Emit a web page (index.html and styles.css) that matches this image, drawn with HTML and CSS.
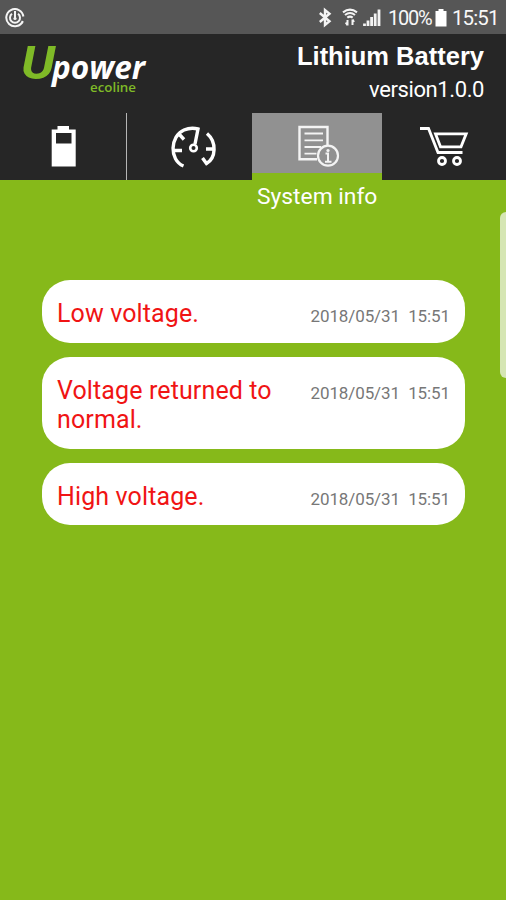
FILE: index.html
```html
<!DOCTYPE html>
<html lang="en">
<head>
    <meta charset="UTF-8">
    <meta name="viewport" content="width=device-width, initial-scale=1.0">
    <title>Lithium Battery</title>
    <link rel="stylesheet" href="styles.css">
</head>
<body>
    <div class="status-bar">
        <svg class="status-power" width="20" height="20" viewBox="0 0 20 20" fill="none" stroke="#f4f4f4">
            <path d="M17.8 13A8.6 8.6 0 1 1 18.4 8.5" stroke-width="2"/>
            <path d="M7 5.8A5 5 0 1 0 13 5.8M10 3V10" stroke-width="2"/>
            <circle cx="10" cy="10.5" r="1.6" fill="#f4f4f4" stroke="none"/>
            <circle cx="17.3" cy="14.6" r="1" fill="#f4f4f4" stroke="none"/>
        </svg>
        <div class="status-right">
            <svg width="80" height="22" viewBox="317 7 80 22" fill="none" stroke="#f4f4f4">
                <path d="M319.8 13L329.5 21.3L325 25V10L329.5 13.7L319.8 22" stroke-width="2.4"/>
                <path d="M343 12.3Q350 6.8 357 12.3M345 15Q350 11 355 15M347.3 17.6Q350 15.5 352.7 17.6" stroke-width="2.1"/>
                <path d="M347.5 25.5V20M345.8 22.5L347.5 25.3M352.5 19.5V25M352.5 19.5L354 22" stroke-width="2"/>
                <path d="M364.5 26V23.5M368 26V20.5M371.6 26V17M375.2 26V13.5M379 26V9.5" stroke-width="2.8"/>
            </svg>
            <span class="status-percent">100%</span>
            <svg class="status-battery" width="12" height="18" viewBox="0 0 12 18" fill="#fff">
                <path d="M3.5 0H8.5V2H11.5V17.5H.5V2H3.5Z"/>
            </svg>
            <span class="status-time">15:51</span>
        </div>
    </div>

    <header class="header">
        <svg class="logo" width="140" height="70" viewBox="10 36 140 70">
            <text class="logo-u" x="21" y="78.5" textLength="34" lengthAdjust="spacingAndGlyphs">U</text>
            <text class="logo-power" x="52" y="79" textLength="93" lengthAdjust="spacingAndGlyphs">power</text>
            <text class="logo-ecoline" x="90" y="91.5" textLength="46" lengthAdjust="spacingAndGlyphs">ecoline</text>
        </svg>
        <div class="title">
            <h1>Lithium Battery</h1>
            <p>version1.0.0</p>
        </div>
    </header>

    <nav class="tabs">
        <a class="tab tab-battery">
            <svg width="66" height="66" viewBox="30 113 66 66">
                <path fill="#fff" fill-rule="evenodd" d="M57.5 126H69V129.5H75.7V166.5H51.7V129.5H57.5ZM56 133V143.5H71.5V133Z"/>
            </svg>
        </a>
        <a class="tab tab-gauge">
            <svg width="60" height="66" viewBox="163 113 60 66" fill="none" stroke="#fff" stroke-width="3.4">
                <path d="M183.5 166C169 160 170 136 184 130Q191 127 198 129L195 144"/>
                <path d="M179 134L184 139.5M174 150.5H182M207 133.5C217 142 216 158 206.5 163.5L202.5 158M214 149H206"/>
                <circle cx="193.5" cy="148" r="3.3" stroke-width="2.6"/>
            </svg>
        </a>
        <a class="tab tab-info active">
            <svg width="60" height="60" viewBox="287 113 60 60" fill="none" stroke="#f4f4f4">
                <path d="M317 159.3H299.5V127H327.5V146" stroke-width="2.4"/>
                <path d="M304.5 133.5H323M304.5 140.3H323M304.5 147H321M304.5 153.7H316.5" stroke-width="1.8"/>
                <circle cx="328" cy="155.7" r="10" stroke-width="2.2"/>
                <circle cx="328" cy="150.5" r="1.6" fill="#f4f4f4" stroke="none"/>
                <path d="M325.5 153.5H328V161.5M325 161.7H331.5" stroke-width="2"/>
            </svg>
        </a>
        <a class="tab tab-cart">
            <svg width="60" height="66" viewBox="413 113 60 66" fill="none" stroke="#fff" stroke-width="2.8">
                <path d="M419 128.5H427.5L437 152.5H461.5"/>
                <path d="M434.5 133.8H465.2L460 146.8H439.5Z"/>
                <circle cx="441" cy="161" r="3.5"/>
                <circle cx="456" cy="161" r="3.5"/>
            </svg>
        </a>
    </nav>

    <main class="content">
        <h2>System info</h2>
        <ul class="messages">
            <li class="message">
                <span class="message-text">Low voltage.</span>
                <span class="message-date">2018/05/31&nbsp; 15:51</span>
            </li>
            <li class="message">
                <span class="message-text">Voltage returned to normal.</span>
                <span class="message-date">2018/05/31&nbsp; 15:51</span>
            </li>
            <li class="message">
                <span class="message-text">High voltage.</span>
                <span class="message-date">2018/05/31&nbsp; 15:51</span>
            </li>
        </ul>
        <div class="edge-handle"></div>
    </main>
</body>
</html>
```
FILE: styles.css
```css
* {
    box-sizing: border-box;
}
body {
    margin: 0;
    height: 900px;
    display: flex;
    flex-direction: column;
    overflow: hidden;
    font-family: Roboto, sans-serif;
    background-color: #86b91a;
}
h1, h2, p, ul {
    margin: 0;
    padding: 0;
    font-weight: normal;
}
.status-bar {
    height: 34px;
    flex: none;
    display: flex;
    align-items: center;
    justify-content: space-between;
    padding: 2px 8px 0 5px;
    background-color: #565656;
    color: #f8f8f8;
    font-size: 21px;
}
.status-right {
    display: flex;
    align-items: center;
}
.status-right svg {
    flex: none;
}
.status-percent {
    width: 47px;
    margin-left: -9px;
    font-size: 20px;
    letter-spacing: -1.2px;
    white-space: nowrap;
}
.status-time {
    width: 46px;
    margin-left: 5px;
    font-size: 20.5px;
    letter-spacing: -0.9px;
    white-space: nowrap;
}
.header {
    height: 79px;
    flex: none;
    display: flex;
    justify-content: space-between;
    padding: 2px 22px 0 10px;
    background-color: #262626;
    color: #fff;
}
.logo-u {
    font: italic 46px Roboto, sans-serif;
    font-weight: 700;
    fill: #7fba27;
}
.logo-power {
    font: italic bold 32px "Open Sans", sans-serif;
    fill: #fff;
}
.logo-ecoline {
    font: 600 12px "Open Sans", sans-serif;
    fill: #7fba27;
}
.title {
    padding-top: 6px;
    text-align: right;
}
.title h1 {
    font: bold 25.5px/28px "Liberation Sans", Arial, sans-serif;
}
.title p {
    font-size: 22px;
    letter-spacing: -0.4px;
    line-height: 26px;
    margin-top: 7px;
}
.tabs {
    height: 67px;
    flex: none;
    display: grid;
    grid-template-columns: 127px 125px 130px 124px;
    background-color: #262626;
}
.tab {
    display: flex;
    justify-content: center;
    align-items: flex-start;
}
.tab-battery {
    border-right: 1px solid #b5b5b5;
}
.tab-gauge {
    padding-left: 7px;
}
.tab.active {
    background-color: #919191;
    border-bottom: 7px solid #86b91a;
}
.content {
    position: relative;
    flex: 1;
}
.content h2 {
    margin-left: 257px;
    padding-top: 3px;
    color: #fff;
    font-size: 22.8px;
    line-height: 28px;
}
.messages {
    display: flex;
    flex-direction: column;
    gap: 14px;
    margin: 69px 41px 0 42px;
    list-style: none;
}
.message {
    display: flex;
    justify-content: space-between;
    padding: 19px 15px 14px;
    border-radius: 28px;
    background-color: #fff;
}
.message-text {
    width: 230px;
    color: #f01414;
    font-size: 25px;
    letter-spacing: 0.12px;
    line-height: 29.5px;
}
.message-date {
    color: #777;
    font-size: 17px;
    letter-spacing: -0.1px;
    line-height: 34px;
    height: 29px;
    white-space: nowrap;
}
/* edge panel handle on the right of the screen */
.edge-handle {
    position: absolute;
    top: 32px;
    right: 0;
    width: 6px;
    height: 166px;
    border-radius: 6px 0 0 6px;
    background-color: #d5e6b3;
}
```
